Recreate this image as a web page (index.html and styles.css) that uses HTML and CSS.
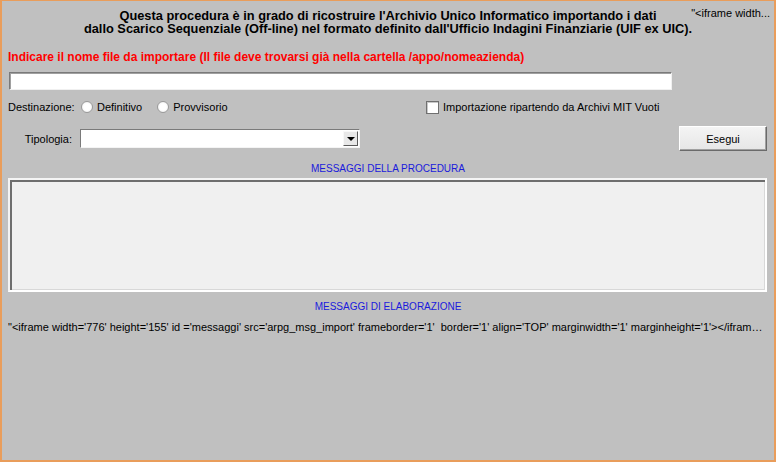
FILE: index.html
```html
<!DOCTYPE html>
<html lang="it">
<head>
<meta charset="utf-8">
<title>Importazione Archivio Unico Informatico</title>
<link rel="stylesheet" href="styles.css">
</head>
<body>
<div class="page">
  <header class="head">
    <div class="head-side"></div>
    <h1 class="title">Questa procedura è in grado di ricostruire l'Archivio Unico Informatico importando i dati<br>dallo Scarico Sequenziale (Off-line) nel formato definito dall'Ufficio Indagini Finanziarie (UIF ex UIC).</h1>
    <div class="head-side head-right"><span class="head-note">"&lt;iframe width...</span></div>
  </header>

  <p class="warn">Indicare il nome file da importare (Il file deve trovarsi già nella cartella /appo/nomeazienda)</p>

  <div class="filebox"></div>

  <div class="row row-dest">
    <span class="lbl">Destinazione:</span>
    <div class="radios">
      <span class="radio"></span><span class="opt">Definitivo</span>
      <span class="radio"></span><span class="opt">Provvisorio</span>
    </div>
    <span class="check"></span><span class="opt">Importazione ripartendo da Archivi MIT Vuoti</span>
  </div>

  <div class="row row-tipo">
    <span class="lbl">Tipologia:</span>
    <div class="select"><span class="arrow"></span></div>
    <div class="btn">Esegui</div>
  </div>

  <div class="caption cap-1">MESSAGGI DELLA PROCEDURA</div>
  <div class="msgbox"></div>
  <div class="caption cap-2">MESSAGGI DI ELABORAZIONE</div>
  <div class="raw">"&lt;iframe width='776' height='155' id ='messaggi' src='arpg_msg_import' frameborder='1'&nbsp; border='1' align='TOP' marginwidth='1' marginheight='1'&gt;&lt;/iframe&gt;"</div>
</div>
</body>
</html>
```

FILE: styles.css
```css
html, body {
  margin: 0;
  padding: 0;
}
body {
  font-family: "Liberation Sans", Arial, sans-serif;
  font-size: 11px;
  color: #000;
  background: #c0c0c0;
}
.page {
  box-sizing: border-box;
  width: 776px;
  height: 462px;
  border: 2px solid #e99d5b;
  border-top-width: 1px;
  background: #c0c0c0;
  padding: 0 6px;
  overflow: hidden;
}
.head {
  display: grid;
  grid-template-columns: minmax(0, 1fr) auto minmax(0, 1fr);
  align-items: start;
  padding-top: 8px;
}
.title {
  margin: 0;
  font-size: 12.8px;
  font-weight: bold;
  line-height: 13px;
  text-align: center;
  white-space: nowrap;
}
.head-right {
  display: flex;
  justify-content: flex-end;
  margin-right: -2px;
  margin-top: -2px;
}
.head-note {
  font-size: 11px;
  line-height: 12px;
  white-space: nowrap;
}
.warn {
  margin: 15px 0 0;
  color: #ff0000;
  font-weight: bold;
  font-size: 12px;
  line-height: 14px;
  white-space: nowrap;
}
.filebox {
  box-sizing: border-box;
  width: 663px;
  height: 18px;
  margin: 8px 0 0 1px;
  background: #fff;
  border: 1px solid;
  border-color: #7a7a7a #f0f0f0 #f0f0f0 #7a7a7a;
  box-shadow: inset 1px 1px 0 #a0a0a0;
}
.row {
  display: flex;
  align-items: center;
}
.lbl {
  width: 64px;
  text-align: right;
  white-space: nowrap;
}
.opt {
  white-space: nowrap;
}
.row-dest {
  margin-top: 9px;
  height: 16px;
}
.radios {
  display: flex;
  align-items: center;
  width: 345px;
  margin-left: 9px;
}
.radio {
  box-sizing: border-box;
  width: 12px;
  height: 12px;
  border-radius: 50%;
  background: radial-gradient(circle at 50% 50%, #ffffff 45%, #e6e6e6 100%);
  border: 1px solid #9a9a9a;
  margin-right: 4px;
}
.radio + .opt {
  margin-right: 15px;
}
.check {
  box-sizing: border-box;
  width: 13px;
  height: 13px;
  background: #fff;
  border: 1px solid #707070;
  box-shadow: inset 1px 1px 0 #c8c8c8;
  margin-right: 4px;
}
.row-tipo {
  margin-top: 11px;
  height: 25px;
}
.select {
  box-sizing: border-box;
  width: 280px;
  height: 19px;
  margin-left: 8px;
  background: #fff;
  border: 1px solid;
  border-color: #7a7a7a #f4f4f4 #f4f4f4 #7a7a7a;
  display: flex;
  justify-content: flex-end;
  align-items: center;
  padding-right: 1px;
}
.arrow {
  box-sizing: border-box;
  width: 15px;
  height: 15px;
  background: #e8e8e8;
  border: 1px solid;
  border-color: #f8f8f8 #5a5a5a #5a5a5a #f8f8f8;
  display: flex;
  align-items: center;
  justify-content: center;
}
.arrow::after {
  content: "";
  width: 0;
  height: 0;
  border-left: 4px solid transparent;
  border-right: 4px solid transparent;
  border-top: 4px solid #000;
}
.btn {
  box-sizing: border-box;
  margin-left: auto;
  margin-right: 1px;
  width: 88px;
  height: 25px;
  background: linear-gradient(#f4f4f4, #e6e6e6);
  border: 1px solid;
  border-color: #ffffff #6a6a6a #6a6a6a #ffffff;
  box-shadow: inset -1px -1px 0 #a0a0a0;
  display: flex;
  align-items: center;
  justify-content: center;
}
.caption {
  text-align: center;
  color: #1a1adc;
  font-size: 10px;
  line-height: 14px;
}
.cap-1 {
  margin-top: 11px;
}
.msgbox {
  box-sizing: border-box;
  height: 114px;
  margin: 2px 1px 0 0;
  background: #f0f0f0;
  border: 2px solid;
  border-color: #f4f4f4 #ffffff #ffffff #f4f4f4;
  box-shadow: inset 2px 2px 0 #6e6e6e, inset -1px -1px 0 #d8d8d8;
}
.cap-2 {
  margin-top: 8px;
}
.raw {
  margin-top: 6px;
  line-height: 14px;
  white-space: nowrap;
  overflow: hidden;
  text-overflow: ellipsis;
  width: 758px;
}
```
